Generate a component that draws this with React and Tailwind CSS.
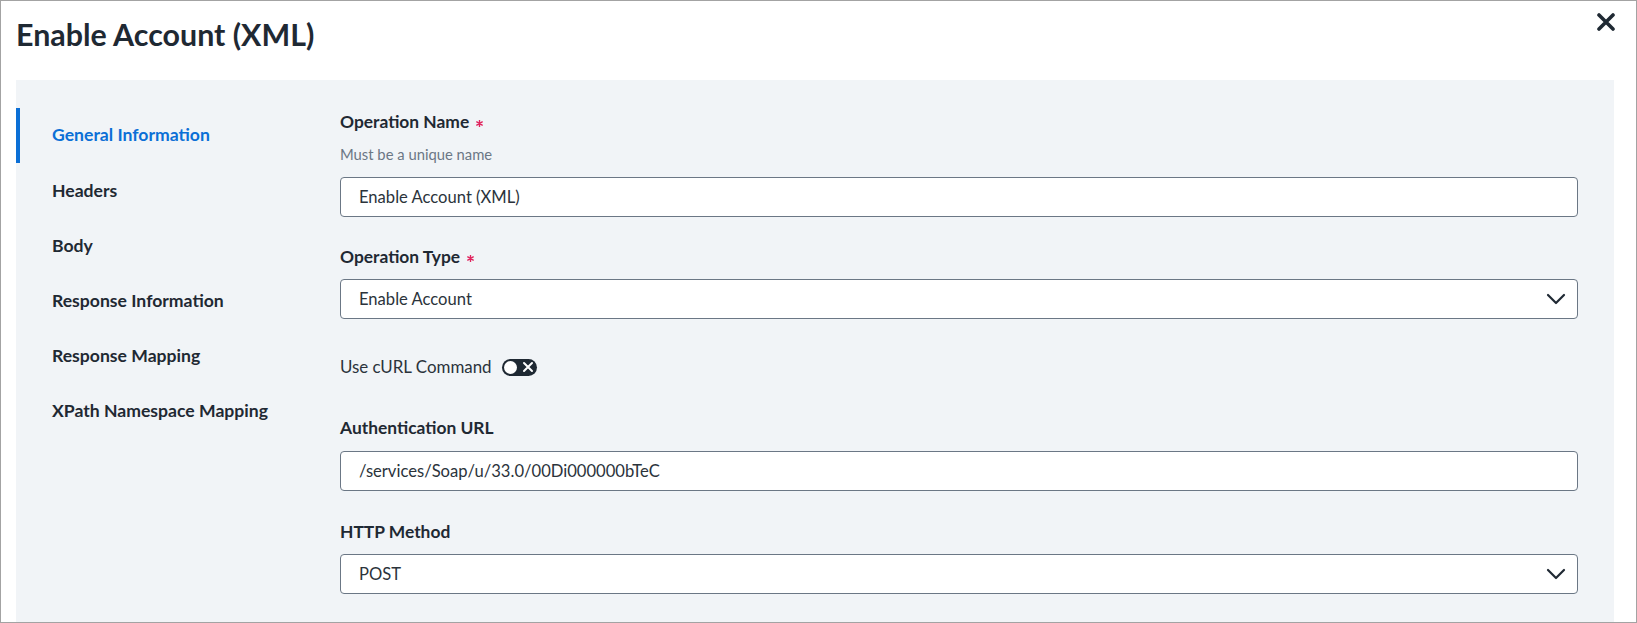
import React from "react";

const font = { fontFamily: "Lato, 'Open Sans', sans-serif" };

function Chevron() {
  return (
    <svg width="20" height="12" viewBox="0 0 20 12" className="shrink-0">
      <path d="M2 2 L10 10 L18 2" fill="none" stroke="#1f2933" strokeWidth="2.2" strokeLinecap="round" strokeLinejoin="round" />
    </svg>
  );
}

function Star() {
  return (
    <svg width="7" height="7" viewBox="0 0 8 8" className="ml-[7px] mt-[3px]">
      <path d="M4 0.5 V7.5 M0.9 2.2 L7.1 5.8 M7.1 2.2 L0.9 5.8" stroke="#e0245e" strokeWidth="1.6" strokeLinecap="round" />
    </svg>
  );
}

function Label({ children, required, className = "" }) {
  return (
    <div className={"h-[24px] flex items-center text-[17.4px] font-bold text-[#1f2933] " + className}>
      {children}
      {required && <Star />}
    </div>
  );
}

function Input({ value, className = "" }) {
  return (
    <div className={"h-[40px] w-[1238px] bg-white border border-[#6b7785] rounded-[4px] flex items-center pl-[18px] text-[16.6px] text-[#2b333b] " + className}>
      {value}
    </div>
  );
}

function Select({ value, className = "" }) {
  return (
    <div className={"h-[40px] w-[1238px] bg-white border border-[#6b7785] rounded-[4px] flex items-center justify-between pl-[18px] pr-[11px] text-[16.6px] text-[#2b333b] " + className}>
      <span>{value}</span>
      <Chevron />
    </div>
  );
}

const navItems = [
  "General Information",
  "Headers",
  "Body",
  "Response Information",
  "Response Mapping",
  "XPath Namespace Mapping",
];

export default function App() {
  return (
    <div style={font} className="w-[1637px] h-[623px] bg-white border border-[#a3a3a3] overflow-hidden flex flex-col">
      <div className="h-[79px] shrink-0 flex items-start justify-between pl-[15px] pr-[21px]">
        <h1 className="mt-[14px] text-[30.4px] font-bold text-[#1f2933] leading-[38px]">Enable Account (XML)</h1>
        <svg width="18" height="18" viewBox="0 0 18 18" className="mt-[12px]">
          <path d="M2 2 L16 16 M16 2 L2 16" stroke="#1f2933" strokeWidth="3.6" strokeLinecap="round" />
        </svg>
      </div>
      <div className="ml-[15px] mr-[22px] flex-1 bg-[#f1f4f7] flex">
        <nav className="w-[324px] shrink-0 pt-[28px] flex flex-col">
          {navItems.map((item, i) => (
            <div
              key={item}
              className={
                "h-[55.2px] flex items-center pl-[32px] border-l-4 text-[17.6px] font-bold " +
                (i === 0 ? "border-[#0b6fd6] text-[#0b6fd6]" : "border-transparent text-[#1f2933]")
              }
            >
              {item}
            </div>
          ))}
        </nav>
        <div className="flex flex-col pt-[30px]">
          <Label required>Operation Name</Label>
          <div className="mt-[10px] h-[20px] flex items-center text-[14.8px] text-[#6b7785]">Must be a unique name</div>
          <Input className="mt-[13px]" value="Enable Account (XML)" />
          <Label required className="mt-[28px]">Operation Type</Label>
          <Select className="mt-[10px]" value="Enable Account" />
          <div className="mt-[36px] h-[24px] flex items-center text-[16.9px] text-[#2b333b]">
            <span>Use cURL Command</span>
            <div className="ml-[10px] w-[35px] h-[17px] rounded-full bg-[#1f2933] flex items-center justify-between px-[2px]">
              <div className="w-[13px] h-[13px] rounded-full bg-white" />
              <svg width="12" height="12" viewBox="0 0 12 12" className="mr-[1px]">
                <path d="M2 2 L10 10 M10 2 L2 10" stroke="white" strokeWidth="2" strokeLinecap="round" />
              </svg>
            </div>
          </div>
          <Label className="mt-[37px]">Authentication URL</Label>
          <Input className="mt-[11px]" value="/services/Soap/u/33.0/00Di000000bTeC" />
          <Label className="mt-[29px]">HTTP Method</Label>
          <Select className="mt-[10px]" value="POST" />
        </div>
      </div>
    </div>
  );
}
